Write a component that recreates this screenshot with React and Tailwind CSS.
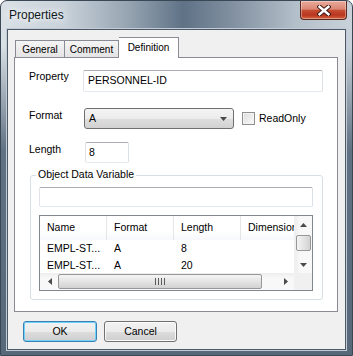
import React from "react";

const Arrow = ({ dir }) => {
  const pts = {
    up: "0,4 3.5,0 7,4",
    down: "0,0 7,0 3.5,4",
    left: "4,0 4,7 0,3.5",
    right: "0,0 4,3.5 0,7",
  }[dir];
  const vertical = dir === "up" || dir === "down";
  return (
    <svg width={vertical ? 7 : 4} height={vertical ? 4 : 7} viewBox={vertical ? "0 0 7 4" : "0 0 4 7"}>
      <polygon points={pts} fill="#4a4a4a" />
    </svg>
  );
};

const rows = [
  { name: "EMPL-ST...", format: "A", length: "8" },
  { name: "EMPL-ST...", format: "A", length: "20" },
];

const App = () => {
  return (
    <div className="relative w-[353px] h-[356px] flex flex-col overflow-hidden rounded-t-[7px] border border-[#3a4754] bg-[linear-gradient(to_bottom,transparent_0px,transparent_45px,#607183_150px,#56687a_100%),linear-gradient(to_right,#d9e0e6_0%,#c9d2da_18%,#97a5b2_36%,#5f7286_52%,#8795a5_68%,#b3bfc9_84%,#c9d2da_100%)] font-['Liberation_Sans',Arial,sans-serif] text-[10.5px] text-black">
      {/* title bar */}
      <div className="h-[28px] flex items-center pl-[8px]">
        <span className="text-[12px] text-[#101820] [text-shadow:0_0_6px_#ffffff,0_0_10px_#ffffff]">Properties</span>
      </div>
      <div className="absolute left-[299px] top-0 w-[47px] h-[19px] rounded-b-[4px] border border-t-0 border-[#5a2920] bg-[linear-gradient(to_bottom,#e9aa9b_0%,#dc8774_45%,#c64c34_52%,#b8361f_78%,#d4643f_100%)] flex items-center justify-center shadow-[inset_0_0_0_1px_rgba(255,255,255,0.35)]">
        <svg width="14" height="11" viewBox="0 0 14 11">
          <path d="M2.5 1.8 L11.5 9.2 M11.5 1.8 L2.5 9.2" stroke="#3a1710" strokeWidth="4.4" strokeLinecap="square" fill="none" />
          <path d="M2.5 1.8 L11.5 9.2 M11.5 1.8 L2.5 9.2" stroke="#ffffff" strokeWidth="2.4" strokeLinecap="square" fill="none" />
        </svg>
      </div>

      {/* client area */}
      <div className="px-[6px]">
        <div className="h-[321px] border border-[#4c5966] bg-[#f0f0f0] shadow-[0_0_0_1px_#c3ccd4]">
          {/* tabs */}
          <div className="relative z-10 mt-[7px] ml-[7px] h-[20px] flex items-end">
            <div className="w-[50px] h-[17px] flex items-center justify-center border border-b-0 border-[#898c95] bg-[linear-gradient(#f4f4f4,#e4e4e4)] text-[10px]">
              General
            </div>
            <div className="w-[54px] h-[17px] flex items-center justify-center border border-b-0 border-l-0 border-[#898c95] bg-[linear-gradient(#f4f4f4,#e4e4e4)] text-[10px]">
              Comment
            </div>
            <div className="w-[60px] h-[21px] -mb-px flex items-center justify-center pb-[2px] border border-b-0 border-l-0 border-[#898c95] bg-white text-[10px]">
              Definition
            </div>
          </div>

          {/* tab panel */}
          <div className="ml-[6px] w-[324px] h-[255px] border border-[#898c95] bg-white">
            <div className="mt-[12px] flex items-start">
              <div className="w-[68px] pl-[14px] leading-[13px]">Property</div>
              <div className="w-[240px] h-[22px] flex items-center pl-[4px] border border-[#abadb3] border-l-[#e2e3ea] border-r-[#dbdfe6] border-b-[#e3e9ef] rounded-[2px] bg-white">
                PERSONNEL-ID
              </div>
            </div>

            <div className="mt-[16px] flex items-start">
              <div className="w-[69px] pl-[14px] leading-[13px] pt-[1px]">Format</div>
              <div className="flex items-center">
                <div className="w-[150px] h-[21px] flex items-center justify-between pl-[4px] pr-[6px] border border-[#707070] rounded-[3px] bg-[linear-gradient(to_bottom,#f4f4f4_0%,#ececec_50%,#dedede_51%,#d2d2d2_100%)]">
                  <span>A</span>
                  <Arrow dir="down" />
                </div>
                <div className="ml-[8px] w-[13px] h-[13px] border border-[#8e8f8f] bg-[linear-gradient(135deg,#dcdcdc,#fbfbfb)] shadow-[inset_0_0_0_1px_#f4f4f4]" />
                <span className="ml-[4px]">ReadOnly</span>
              </div>
            </div>

            <div className="mt-[13px] flex items-start">
              <div className="w-[70px] pl-[14px] leading-[13px] pt-[1px]">Length</div>
              <div className="w-[44px] h-[21px] flex items-center pl-[3px] border border-[#abadb3] border-l-[#e2e3ea] border-r-[#dbdfe6] border-b-[#e3e9ef] rounded-[2px] bg-white">
                8
              </div>
            </div>

            {/* group box */}
            <div className="relative mt-[12px] ml-[15px] w-[293px] h-[125px] border border-[#d5dfe5] rounded-[3px] pt-[11px] pl-[8px]">
              <span className="absolute left-[5px] top-[-8px] px-[2px] bg-white leading-[13px]">Object Data Variable</span>
              <div className="w-[274px] h-[20px] border border-[#abadb3] border-l-[#e2e3ea] border-r-[#dbdfe6] border-b-[#e3e9ef] rounded-[2px] bg-white" />

              {/* list view */}
              <div className="mt-[8px] w-[274px] h-[76px] border border-[#828790] bg-white flex flex-col">
                <div className="h-[57px] flex">
                  <div className="w-[254px] overflow-hidden">
                    <div className="h-[24px] flex whitespace-nowrap">
                      {["Name", "Format", "Length", "Dimension"].map((h, i) => (
                        <div
                          key={h}
                          className={`h-full flex items-center pl-[7px] bg-[linear-gradient(#ffffff,#ffffff_60%,#f7f8fa)] ${i < 3 ? "w-[67px] shrink-0 border-r border-[#e5e5e5]" : "w-[80px] shrink-0"}`}
                        >
                          {h}
                        </div>
                      ))}
                    </div>
                    {rows.map((r, i) => (
                      <div key={i} className="h-[17px] flex items-center whitespace-nowrap">
                        <div className="w-[67px] shrink-0 pl-[7px]">{r.name}</div>
                        <div className="w-[67px] shrink-0 pl-[7px]">{r.format}</div>
                        <div className="w-[67px] shrink-0 pl-[7px]">{r.length}</div>
                      </div>
                    ))}
                  </div>
                  {/* vertical scrollbar */}
                  <div className="w-[18px] h-full flex flex-col items-center bg-[linear-gradient(to_right,#ededed,#f8f8f8_30%,#f8f8f8)] border-l border-[#f0f0f0]">
                    <div className="h-[17px] w-full flex items-center justify-center pt-[1px]">
                      <Arrow dir="up" />
                    </div>
                    <div className="mt-[2px] w-[15px] h-[16px] rounded-[2px] border border-[#979797] bg-[linear-gradient(to_right,#f4f4f4,#e4e4e4_50%,#d2d2d2)]" />
                    <div className="flex-1" />
                    <div className="h-[17px] w-full flex items-center justify-center">
                      <Arrow dir="down" />
                    </div>
                  </div>
                </div>
                {/* horizontal scrollbar */}
                <div className="h-[17px] flex">
                  <div className="w-[254px] h-full flex items-center bg-[linear-gradient(#ededed,#f8f8f8_30%,#f8f8f8)]">
                    <div className="w-[18px] h-full flex items-center justify-center pl-[2px]">
                      <Arrow dir="left" />
                    </div>
                    <div className="w-[204px] h-[15px] rounded-[2px] border border-[#979797] bg-[linear-gradient(#f4f4f4,#e4e4e4_50%,#d2d2d2)] flex items-center justify-center">
                      <div className="flex gap-[2px]">
                        <div className="w-px h-[7px] bg-[#5a5a5a]" />
                        <div className="w-px h-[7px] bg-[#5a5a5a]" />
                        <div className="w-px h-[7px] bg-[#5a5a5a]" />
                        <div className="w-px h-[7px] bg-[#5a5a5a]" />
                      </div>
                    </div>
                    <div className="flex-1 h-full flex items-center justify-end pr-[6px]">
                      <Arrow dir="right" />
                    </div>
                  </div>
                  <div className="flex-1 h-full bg-[#f0f0f0]" />
                </div>
              </div>
            </div>
          </div>

          {/* buttons */}
          <div className="mt-[9px] ml-[15px] flex gap-[7px]">
            <button className="w-[74px] h-[21px] rounded-[3px] border border-[#3c7fb1] bg-[linear-gradient(to_bottom,#f2f2f2_0%,#ebebeb_50%,#dddddd_51%,#cfcfcf_100%)] shadow-[inset_0_0_0_1px_#6fd2fb] text-[10.5px]">
              OK
            </button>
            <button className="w-[73px] h-[21px] rounded-[3px] border border-[#707070] bg-[linear-gradient(to_bottom,#f2f2f2_0%,#ebebeb_50%,#dddddd_51%,#cfcfcf_100%)] shadow-[inset_0_0_0_1px_#fbfbfb] text-[10.5px]">
              Cancel
            </button>
          </div>
        </div>
      </div>
    </div>
  );
};

export default App;
